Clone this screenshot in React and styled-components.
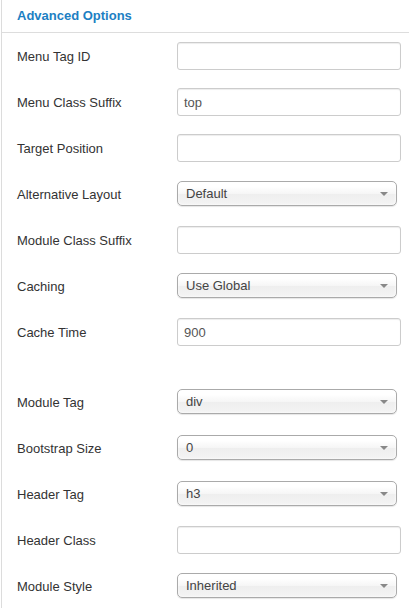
import React from "react";
import styled, { createGlobalStyle } from "styled-components";

const Global = createGlobalStyle`
  html, body { margin: 0; padding: 0; background: #fff; }
  body { font-family: "Liberation Sans", Arial, sans-serif; font-size: 13px; color: #333; }
`;

const Panel = styled.div`
  margin-left: 1px;
  border-left: 1px solid #dcdcdc;
  width: 407px;
  height: 608px;
  overflow: hidden;
`;

const Header = styled.div`
  height: 32px;
  border-bottom: 1px solid #dddddd;
  display: flex;
  align-items: center;
  padding-left: 15px;
  padding-bottom: 1px;
  box-sizing: border-box;
  height: 33px;
`;

const Title = styled.h3`
  margin: 0;
  font-size: 13px;
  font-weight: bold;
  color: #1d80c3;
  line-height: 18px;
`;

const Row = styled.div`
  display: grid;
  grid-template-columns: 160px 1fr;
  align-items: center;
  height: 46px;
  padding-left: 15px;
`;

const Spacer = styled.div`
  height: 24px;
`;

const Label = styled.label`
  font-size: 13px;
  color: #333;
  line-height: 18px;
  padding-top: 1px;
`;

const Input = styled.div`
  box-sizing: border-box;
  width: 224px;
  height: 28px;
  border: 1px solid #cccccc;
  border-radius: 3px;
  box-shadow: inset 0 1px 1px rgba(0, 0, 0, 0.075);
  padding: 0 6px;
  display: flex;
  align-items: center;
  font-size: 13px;
  color: #555;
  background: #fff;
`;

const Select = styled.div`
  position: relative;
  box-sizing: border-box;
  width: 220px;
  height: 25px;
  margin-bottom: 2px;
  border: 1px solid #aaaaaa;
  border-radius: 5px;
  background: linear-gradient(#ffffff 20%, #f6f6f6 50%, #eeeeee 52%, #f4f4f4 100%);
  box-shadow: inset 0 0 3px #fff, 0 1px 1px rgba(0, 0, 0, 0.1);
  padding-left: 8px;
  display: flex;
  align-items: center;
  font-size: 13px;
  color: #444;
`;

const Arrow = styled.span`
  position: absolute;
  right: 8px;
  top: 10px;
  width: 0;
  height: 0;
  border-left: 4px solid transparent;
  border-right: 4px solid transparent;
  border-top: 4px solid #888;
`;

const rowsA = [
  { label: "Menu Tag ID", type: "input", value: "" },
  { label: "Menu Class Suffix", type: "input", value: "top" },
  { label: "Target Position", type: "input", value: "" },
  { label: "Alternative Layout", type: "select", value: "Default" },
  { label: "Module Class Suffix", type: "input", value: "" },
  { label: "Caching", type: "select", value: "Use Global" },
  { label: "Cache Time", type: "input", value: "900" },
];

const rowsB = [
  { label: "Module Tag", type: "select", value: "div" },
  { label: "Bootstrap Size", type: "select", value: "0" },
  { label: "Header Tag", type: "select", value: "h3" },
  { label: "Header Class", type: "input", value: "" },
  { label: "Module Style", type: "select", value: "Inherited" },
];

function Field({ label, type, value }) {
  return (
    <Row>
      <Label>{label}</Label>
      {type === "input" ? (
        <Input>{value}</Input>
      ) : (
        <Select>
          {value}
          <Arrow />
        </Select>
      )}
    </Row>
  );
}

export default function App() {
  return (
    <>
      <Global />
      <Panel>
        <Header>
          <Title>Advanced Options</Title>
        </Header>
        {rowsA.map((r) => (
          <Field key={r.label} {...r} />
        ))}
        <Spacer />
        {rowsB.map((r) => (
          <Field key={r.label} {...r} />
        ))}
      </Panel>
    </>
  );
}
